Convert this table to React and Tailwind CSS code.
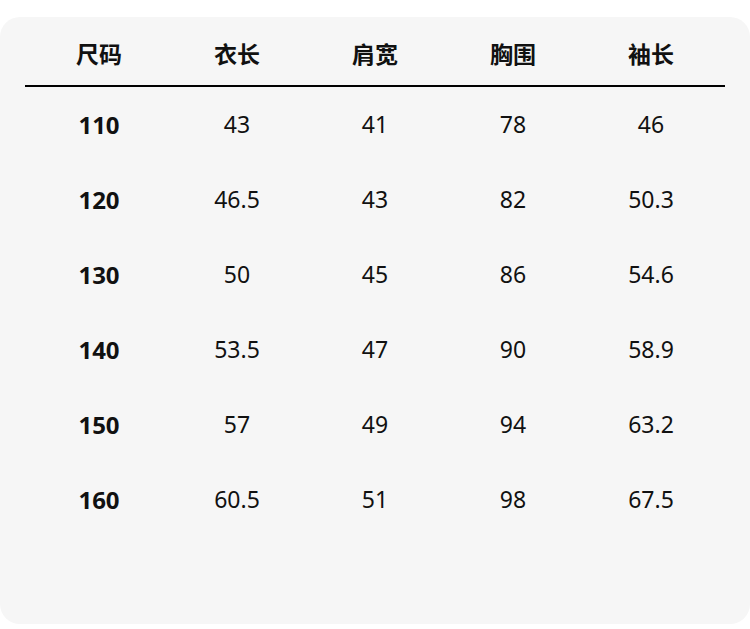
const headers = ["尺码", "衣长", "肩宽", "胸围", "袖长"];

const rows = [
  ["110", "43", "41", "78", "46"],
  ["120", "46.5", "43", "82", "50.3"],
  ["130", "50", "45", "86", "54.6"],
  ["140", "53.5", "47", "90", "58.9"],
  ["150", "57", "49", "94", "63.2"],
  ["160", "60.5", "51", "98", "67.5"],
];

export default function App() {
  return (
    <div
      className="w-[750px] h-[629px] bg-white pt-[17px] text-[#111]"
      style={{ fontFamily: '"Noto Sans", "Noto Sans CJK SC", sans-serif' }}
    >
      <div className="h-[607px] bg-[#f6f6f6] rounded-[20px] px-[25px]">
        <div className="grid grid-cols-5 px-[5px] pt-[25px] pb-[19px]">
          {headers.map((h) => (
            <div key={h} className="text-center text-[23px] leading-[24px] font-bold">
              {h}
            </div>
          ))}
        </div>
        <div className="h-[2px] bg-black" />
        {rows.map((r) => (
          <div key={r[0]} className="grid grid-cols-5 px-[5px] h-[75px] items-center">
            {r.map((c, i) => (
              <div
                key={i}
                className={
                  i === 0
                    ? "text-center text-[24px] font-bold"
                    : "text-center text-[23px] font-normal"
                }
              >
                {c}
              </div>
            ))}
          </div>
        ))}
      </div>
    </div>
  );
}
